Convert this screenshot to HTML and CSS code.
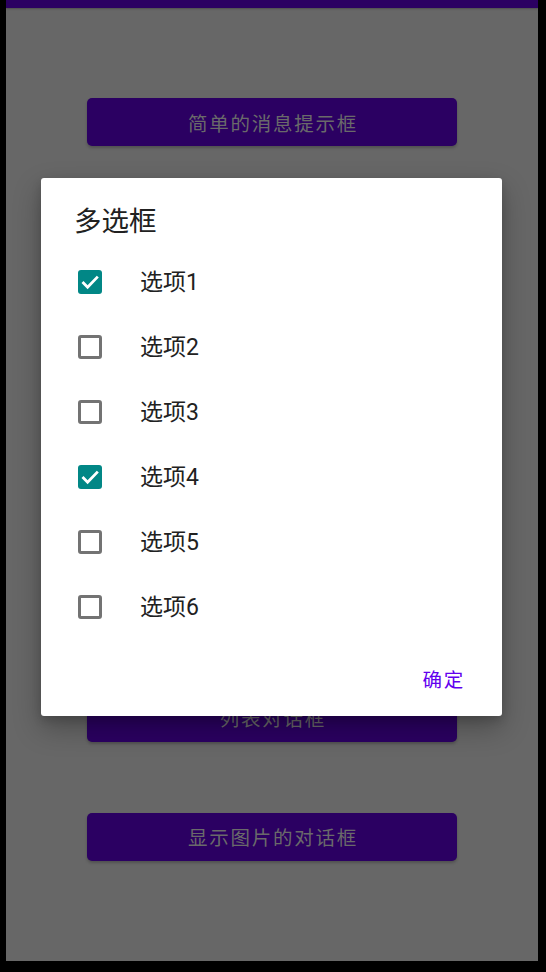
FILE: index.html
```html
<!DOCTYPE html>
<html>
<head>
  <meta charset="UTF-8">
  <title>Dialogs</title>
  <link rel="stylesheet" href="styles.css">
</head>
<body>
  <div class="screen">
    <div class="toolbar"></div>
    <main class="buttons">
      <button class="btn">简单的消息提示框</button>
      <button class="btn">单选对话框</button>
      <button class="btn">多选对话框</button>
      <button class="btn">进度条对话框</button>
      <button class="btn">自定义对话框</button>
      <button class="btn">列表对话框</button>
      <button class="btn">显示图片的对话框</button>
    </main>

    <div class="dialog">
      <h2 class="dialog-title">多选框</h2>
      <ul class="options">
        <li class="option"><span class="box checked"><svg viewBox="0 0 24 24"><polyline points="4.5,12 9.6,17.2 19.8,6.6"/></svg></span>选项1</li>
        <li class="option"><span class="box"></span>选项2</li>
        <li class="option"><span class="box"></span>选项3</li>
        <li class="option"><span class="box checked"><svg viewBox="0 0 24 24"><polyline points="4.5,12 9.6,17.2 19.8,6.6"/></svg></span>选项4</li>
        <li class="option"><span class="box"></span>选项5</li>
        <li class="option"><span class="box"></span>选项6</li>
      </ul>
      <div class="actions">
        <button class="text-btn">确定</button>
      </div>
    </div>
  </div>
</body>
</html>
```

FILE: styles.css
```css
:root {
  --scrim-bg: #676767;
  --scrim-primary: #2b0062;
  --scrim-text: #6a6a6a;
  --primary: #6200EE;
  --secondary: #018786;
  --text: #212121;
  --font: Roboto, "Noto Sans CJK SC", sans-serif;
}

body {
  margin: 0;
  background: #000;
  font-family: var(--font);
}

.screen {
  position: relative;
  margin-left: 6px;
  width: 532px;
  height: 961px;
  background: var(--scrim-bg);
}

.toolbar {
  height: 8px;
  background: var(--scrim-primary);
  box-shadow: 0 1px 2px rgba(0, 0, 0, 0.25);
}

.buttons {
  display: flex;
  flex-direction: column;
  align-items: center;
  gap: 71.17px;
  padding-top: 90px;
}

.btn {
  width: 370px;
  height: 48px;
  padding: 0 0 0 1.8px;
  border: none;
  border-radius: 5px;
  background: var(--scrim-primary);
  color: var(--scrim-text);
  font-family: var(--font);
  font-size: 19.5px;
  letter-spacing: 0.09em;
  box-shadow: 0 2px 3px rgba(0, 0, 0, 0.22);
}

/* dialog */
.dialog {
  position: absolute;
  left: 35px;
  top: 178px;
  width: 461px;
  height: 538px;
  box-sizing: border-box;
  padding-top: 26px;
  background: #fff;
  border-radius: 3px;
  box-shadow: 0 12px 28px rgba(0, 0, 0, 0.28), 0 4px 10px rgba(0, 0, 0, 0.15);
}

.dialog-title {
  margin: 0;
  padding-left: 33px;
  height: 36px;
  line-height: 36px;
  font-size: 27.5px;
  font-weight: normal;
  color: var(--text);
}

.options {
  list-style: none;
  margin: 9.5px 0 0;
  padding: 0;
}

.option {
  display: flex;
  align-items: center;
  height: 65px;
  padding-left: 37px;
  gap: 38px;
  font-size: 23px;
  line-height: 1;
  color: var(--text);
}

.box {
  width: 24px;
  height: 24px;
  box-sizing: border-box;
  border: 3px solid #737373;
  border-radius: 3px;
  flex-shrink: 0;
}

.box.checked {
  border: none;
  background: var(--secondary);
}

.box svg {
  display: block;
  width: 24px;
  height: 24px;
  fill: none;
  stroke: #fff;
  stroke-width: 2.8;
}

.actions {
  display: flex;
  justify-content: flex-end;
  margin-top: 14.5px;
  padding-right: 26px;
}

.text-btn {
  height: 48px;
  padding: 0 11px;
  border: none;
  background: none;
  color: var(--primary);
  font-family: var(--font);
  font-size: 19.5px;
  letter-spacing: 0.09em;
}
```
